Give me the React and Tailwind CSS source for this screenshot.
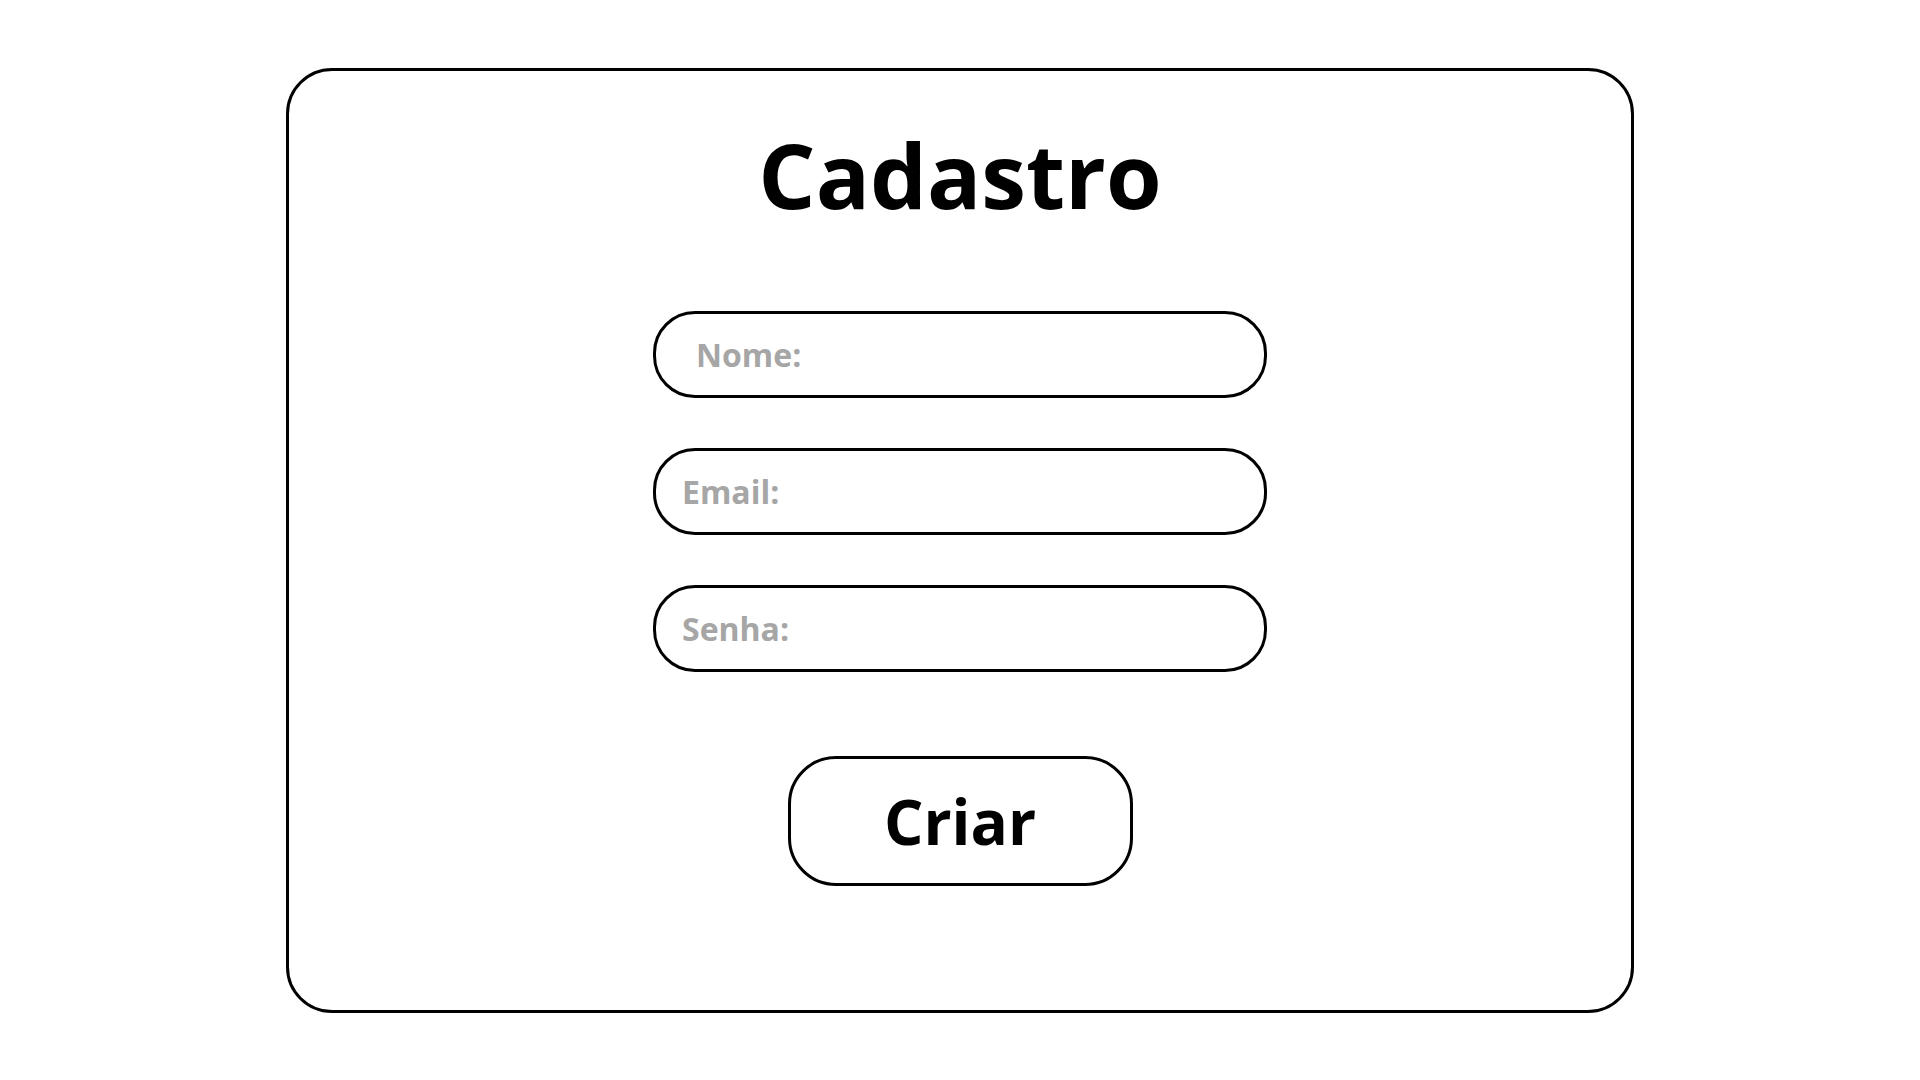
import { useState } from 'react';

const inputStyle =
    'w-[614px] h-[87px] rounded-[42px] border-[3px] border-black bg-white font-bold text-[32px] text-black outline-none placeholder:text-[#a6a6a6]';

function App() {
    const [form, setForm] = useState({ nome: '', email: '', senha: '' });

    function submit(e) {
        e.preventDefault();
    }

    return (
        <div className="w-full h-screen bg-white flex items-center justify-center" style={{ fontFamily: '"Open Sans", sans-serif' }}>
            <form
                onSubmit={submit}
                className="w-[1348px] h-[945px] border-[3px] border-black rounded-[46px] flex flex-col items-center pt-[58px]"
            >
                <h1 className="text-[90px] leading-none font-bold text-black">Cadastro</h1>

                <input
                    value={form.nome}
                    onChange={(e) => setForm({ ...form, nome: e.target.value })}
                    placeholder="Nome:"
                    className={`${inputStyle} mt-[92px] pl-[40px]`}
                />
                <input
                    value={form.email}
                    onChange={(e) => setForm({ ...form, email: e.target.value })}
                    placeholder="Email:"
                    className={`${inputStyle} mt-[50px] pl-[26px]`}
                />
                <input
                    type="password"
                    value={form.senha}
                    onChange={(e) => setForm({ ...form, senha: e.target.value })}
                    placeholder="Senha:"
                    className={`${inputStyle} mt-[50px] pl-[26px]`}
                />

                <button className="mt-[84px] w-[345px] h-[130px] rounded-[48px] border-[3px] border-black bg-white text-[62px] font-bold text-black leading-none">
                    Criar
                </button>
            </form>
        </div>
    );
}

export default App;
